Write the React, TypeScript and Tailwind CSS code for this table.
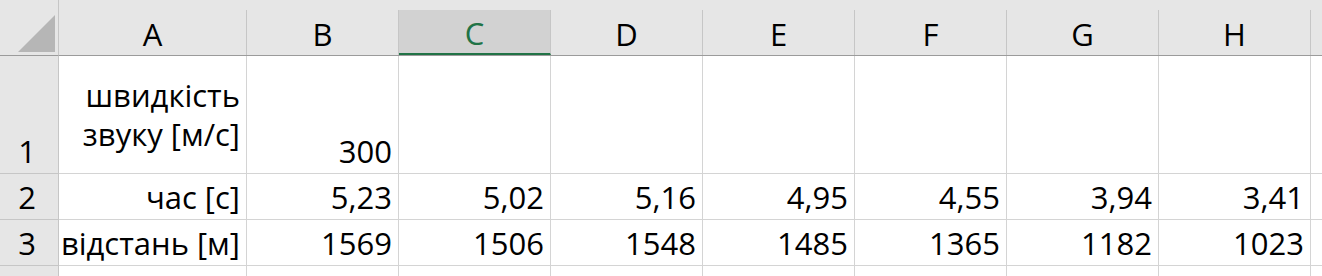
const cols = ["A", "B", "C", "D", "E", "F", "G", "H"]

const rows: { n: string; h: string; a: string[]; cells: string[] }[] = [
  { n: "1", h: "h-[118px]", a: ["швидкість", "звуку [м/с]"], cells: ["300", "", "", "", "", "", ""] },
  { n: "2", h: "h-[46px]", a: ["час [с]"], cells: ["5,23", "5,02", "5,16", "4,95", "4,55", "3,94", "3,41"] },
  { n: "3", h: "h-[46px]", a: ["відстань [м]"], cells: ["1569", "1506", "1548", "1485", "1365", "1182", "1023"] },
]

function Corner() {
  return (
    <div className="w-[59px] h-[56px] shrink-0 border-r border-b border-r-[#c6c6c6] border-b-[#9b9b9b] relative">
      <svg className="absolute left-[18px] top-[15px]" width="38" height="38" viewBox="0 0 38 38">
        <polygon points="37,0 37,37 0,37" fill="#b6b6b6" />
      </svg>
    </div>
  )
}

export default function App() {
  return (
    <div className="w-[1322px] h-[276px] overflow-hidden bg-white text-black font-['Open_Sans',sans-serif] text-[31px] leading-[30px]">
      {/* column headers */}
      <div className="flex bg-[#e6e6e6]">
        <Corner />
        {cols.map((c) => {
          const sel = c === "C"
          return (
            <div
              key={c}
              className={`${c === "A" ? "w-[188px]" : "w-[152px]"} h-[56px] shrink-0 pt-[10px] border-b border-b-[#9b9b9b]`}
            >
              <div
                className={`h-full flex items-center justify-center pt-[3px] border-r border-r-[#c6c6c6] ${
                  sel ? "bg-[#d2d2d2] text-[#217346] border-b-2 border-b-[#217346]" : ""
                }`}
              >
                {c}
              </div>
            </div>
          )
        })}
        <div className="flex-1 h-[56px] pt-[10px] border-b border-b-[#9b9b9b]" />
      </div>

      {rows.map((r) => (
        <div key={r.n} className="flex">
          <div className={`w-[59px] ${r.h} shrink-0 bg-[#e6e6e6] border-r border-b border-[#c6c6c6] flex items-end justify-center pb-[7px] pr-[4px]`}>
            {r.n}
          </div>
          <div
            className={`w-[188px] ${r.h} shrink-0 border-r border-b border-[#d4d4d4] flex ${
              r.a.length > 1 ? "flex-col justify-center leading-[39px]" : "flex-col justify-end pb-[7px]"
            } items-end pr-[6px] whitespace-nowrap`}
          >
            {r.a.map((t) => (
              <span key={t}>{t}</span>
            ))}
          </div>
          {r.cells.map((v, i) => (
            <div
              key={i}
              className={`w-[152px] ${r.h} shrink-0 border-r border-b border-[#d4d4d4] flex items-end justify-end pb-[7px] pr-[6px]`}
            >
              {v}
            </div>
          ))}
          <div className={`flex-1 ${r.h} border-b border-[#d4d4d4]`} />
        </div>
      ))}

      {/* row 4 */}
      <div className="flex h-[20px]">
        <div className="w-[59px] shrink-0 bg-[#e6e6e6] border-r border-[#c6c6c6]" />
        <div className="w-[188px] shrink-0 border-r border-[#d4d4d4]" />
        {cols.slice(1).map((c) => (
          <div key={c} className="w-[152px] shrink-0 border-r border-[#d4d4d4]" />
        ))}
        <div className="flex-1" />
      </div>
    </div>
  )
}
